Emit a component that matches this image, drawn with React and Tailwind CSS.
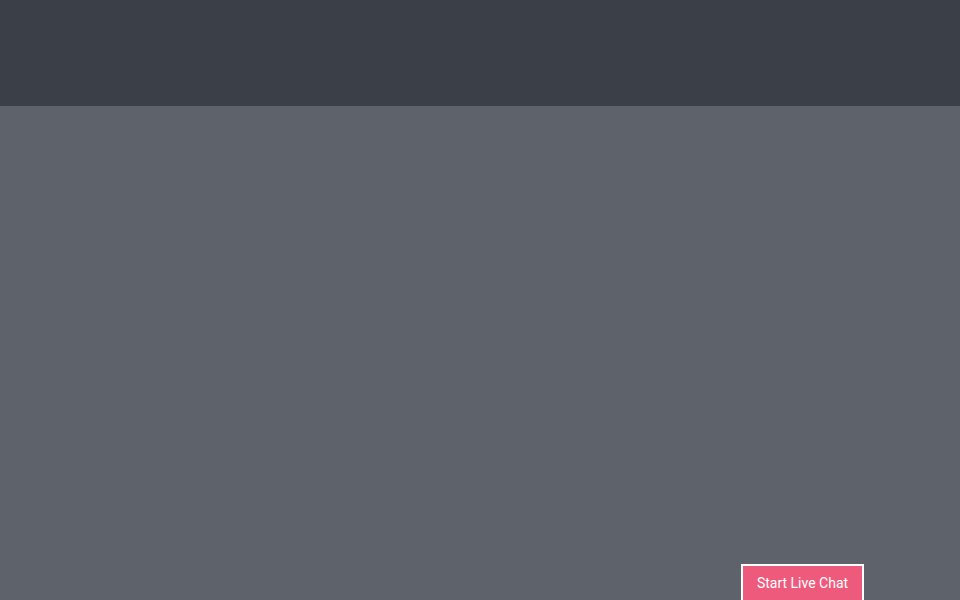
import React from "react";

const App = () => {
  return (
    <div className="w-[960px] h-[600px] overflow-hidden flex flex-col bg-[#5e636b]" style={{ fontFamily: "Roboto, sans-serif" }}>
      <div className="h-[106px] bg-[#3a3f48] shrink-0"></div>
      <div className="flex-1 relative">
        <button className="absolute left-[741px] top-[458px] w-[123px] h-[40px] bg-[#ee5a7c] border-2 border-white text-white text-sm pb-[3px]">
          Start Live Chat
        </button>
      </div>
    </div>
  );
};

export default App;
